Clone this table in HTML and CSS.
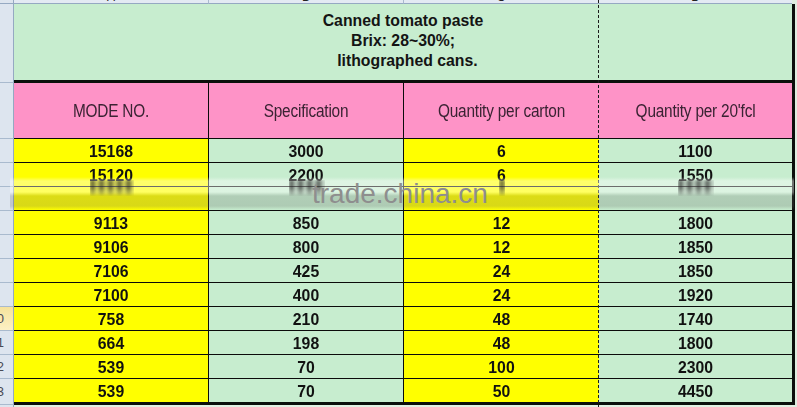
FILE: index.html
```html
<!DOCTYPE html>
<html>
<head>
<meta charset="utf-8">
<title>Canned tomato paste</title>
<link rel="stylesheet" href="styles.css">
</head>
<body>
<div class="sheet">
  <div class="row strip">
    <div class="rh"></div>
    <div class="ch w1"><span class="cl">A</span></div>
    <div class="ch w2"><span class="cl">B</span></div>
    <div class="ch w3"><span class="cl">C</span></div>
    <div class="ch w4"><span class="cl">D</span></div>
  </div>

  <div class="row title-row">
    <div class="rh"></div>
    <div class="title">
      <div>Canned tomato paste</div>
      <div>Brix: 28~30%;</div>
      <div>&nbsp;&nbsp;lithographed cans.</div>
    </div>
  </div>

  <div class="row head-row">
    <div class="rh"></div>
    <div class="cell pink c1"><span class="tallh">MODE NO.</span></div>
    <div class="cell pink c2"><span class="tallh">Specification</span></div>
    <div class="cell pink c3"><span class="tallh">Quantity per carton</span></div>
    <div class="cell pink c4"><span class="tallh">Quantity per 20'fcl</span></div>
  </div>

  <div class="row data"><div class="rh"></div><div class="cell yel c1"><b>15168</b></div><div class="cell grn c2"><b>3000</b></div><div class="cell yel c3"><b>6</b></div><div class="cell grn c4"><b>1100</b></div></div>
  <div class="row data"><div class="rh"></div><div class="cell yel c1"><b>15120</b></div><div class="cell grn c2"><b>2200</b></div><div class="cell yel c3"><b>6</b></div><div class="cell grn c4"><b>1550</b></div></div>
  <div class="row data"><div class="rh"></div><div class="cell yel c1"></div><div class="cell grn c2"></div><div class="cell yel c3"></div><div class="cell grn c4"></div></div>
  <div class="row data"><div class="rh"></div><div class="cell yel c1"><b>9113</b></div><div class="cell grn c2"><b>850</b></div><div class="cell yel c3"><b>12</b></div><div class="cell grn c4"><b>1800</b></div></div>
  <div class="row data"><div class="rh"></div><div class="cell yel c1"><b>9106</b></div><div class="cell grn c2"><b>800</b></div><div class="cell yel c3"><b>12</b></div><div class="cell grn c4"><b>1850</b></div></div>
  <div class="row data"><div class="rh"></div><div class="cell yel c1"><b>7106</b></div><div class="cell grn c2"><b>425</b></div><div class="cell yel c3"><b>24</b></div><div class="cell grn c4"><b>1850</b></div></div>
  <div class="row data"><div class="rh"></div><div class="cell yel c1"><b>7100</b></div><div class="cell grn c2"><b>400</b></div><div class="cell yel c3"><b>24</b></div><div class="cell grn c4"><b>1920</b></div></div>
  <div class="row data"><div class="rh sel">10</div><div class="cell yel c1"><b>758</b></div><div class="cell grn c2"><b>210</b></div><div class="cell yel c3"><b>48</b></div><div class="cell grn c4"><b>1740</b></div></div>
  <div class="row data"><div class="rh">11</div><div class="cell yel c1"><b>664</b></div><div class="cell grn c2"><b>198</b></div><div class="cell yel c3"><b>48</b></div><div class="cell grn c4"><b>1800</b></div></div>
  <div class="row data"><div class="rh">12</div><div class="cell yel c1"><b>539</b></div><div class="cell grn c2"><b>70</b></div><div class="cell yel c3"><b>100</b></div><div class="cell grn c4"><b>2300</b></div></div>
  <div class="row data last"><div class="rh">13</div><div class="cell yel c1"><b>539</b></div><div class="cell grn c2"><b>70</b></div><div class="cell yel c3"><b>50</b></div><div class="cell grn c4"><b>4450</b></div></div>
  <div class="row tail"><div class="rh"></div><div class="tailcell"></div></div>

  <div class="pagebreak"></div>

  <div class="wm">
    <div class="smudges">
      <div class="sm w1"><i class="streak s5"></i></div>
      <div class="sm w2"><i class="streak s4"></i></div>
      <div class="sm w3"><i class="streak s1"></i></div>
      <div class="sm w4"><i class="streak s4"></i></div>
    </div>
    <div class="wmtext">trade.china.cn</div>
  </div>
</div>
</body>
</html>
```

FILE: styles.css
```css
* { box-sizing: border-box; }
html, body { margin: 0; padding: 0; }
body {
  width: 797px;
  height: 407px;
  overflow: hidden;
  background: #dfeee0;
  font-family: "Liberation Sans", Arial, sans-serif;
  color: #111;
}
.sheet {
  position: relative;
  width: 797px;
  height: 407px;
  overflow: hidden;
}
.row { display: flex; }

.rh {
  width: 14px;
  flex: none;
  background: #dde5ef;
  border-right: 1px solid #95a9c2;
  border-bottom: 1px solid #a9bace;
  display: flex;
  justify-content: flex-end;
  align-items: center;
  padding-right: 9px;
  overflow: hidden;
  white-space: nowrap;
  font-size: 13px;
  color: #4a4a55;
}
.rh.sel { background: linear-gradient(to bottom, #f6e39c, #fcf0c4); }

/* column header strip */
.strip { height: 4px; }
.strip .rh { border-bottom: 1px solid #95a9c2; }
.ch {
  height: 4px;
  background: #e3eaf3;
  border-bottom: 1px solid #95a9c2;
  border-right: 1px solid #a9bace;
  overflow: hidden;
  display: flex;
  justify-content: center;
  align-items: flex-start;
}
.cl {
  font-size: 12px;
  line-height: 12px;
  margin-top: -9px;
  color: #222;
}
.w1 { width: 195px; }
.w2 { width: 195px; }
.w3 { width: 195px; }
.w4 { width: 193px; border-right: none; }

/* title */
.title-row { height: 79px; }
.title {
  width: 781px;
  background: #c7edcf;
  border-right: 3px solid #0b0f0b;
  border-bottom: 3px solid #0b0f0b;
  text-align: center;
  font-weight: bold;
  font-size: 15.8px;
  line-height: 20px;
  padding-top: 7px;
  color: #141414;
}

/* cells */
.cell {
  display: flex;
  align-items: center;
  justify-content: center;
  border-bottom: 1px solid #0b0b0b;
  font-size: 15.8px;
}
.c1 { width: 195px; border-right: 1px solid #0b0b0b; }
.c2 { width: 195px; border-right: 1px solid #0b0b0b; }
.c3 { width: 195px; }
.c4 { width: 196px; border-right: 3px solid #0b0f0b; }

.pink { background: #fe93c7; color: #3a2333; }
.yel { background: #ffff00; }
.grn { background: #c7edcf; }

.head-row { height: 56px; }
.tallh {
  display: inline-block;
  font-size: 15.4px;
  letter-spacing: -0.2px;
  transform: scaleY(1.15);
}
.data { height: 24px; }
.data b {
  display: inline-block;
  font-weight: bold;
  transform: scaleY(1.1);
  padding-top: 1px;
}
.data.last { height: 26px; }
.data.last .cell { border-bottom: 3px solid #0b0f0b; }

.tail { height: 10px; }
.tailcell { width: 781px; background: #e1f1e3; }

/* page break line */
.pagebreak {
  position: absolute;
  left: 598px;
  top: 0;
  width: 1px;
  height: 407px;
  background: repeating-linear-gradient(to bottom, #1b1b1b 0 3px, rgba(0,0,0,0) 3px 5px);
}

/* watermark overlay */
.wm {
  position: absolute;
  left: 10px;
  top: 177px;
  width: 784px;
  height: 33px;
  background: linear-gradient(to bottom,
    rgba(255,255,255,0) 0,
    rgba(255,255,255,0.42) 4px,
    rgba(255,255,255,0.38) 15px,
    rgba(95,95,95,0.22) 19px,
    rgba(95,95,95,0.24) 29px,
    rgba(95,95,95,0) 33px);
}
.smudges {
  display: flex;
  padding-left: 4px;
}
.sm {
  display: flex;
  justify-content: center;
  height: 33px;
}
.streak {
  display: block;
  margin-top: 3px;
  height: 16px;
  background: repeating-linear-gradient(to right,
    rgba(30,30,30,0.6) 0 5px,
    rgba(30,30,30,0.2) 5px 9px);
  filter: blur(1.8px);
  -webkit-mask-image: linear-gradient(to bottom, #000 0, #000 50%, rgba(0,0,0,0.2) 100%);
  mask-image: linear-gradient(to bottom, #000 0, #000 50%, rgba(0,0,0,0.2) 100%);
}
.s5 { width: 44px; }
.s4 { width: 36px; }
.s1 { width: 6px; background: rgba(30,30,30,0.55); }
.wmtext {
  position: absolute;
  left: 302px;
  top: 3px;
  font-size: 28px;
  line-height: 28px;
  color: #8e8e8e;
  white-space: nowrap;
}
```
